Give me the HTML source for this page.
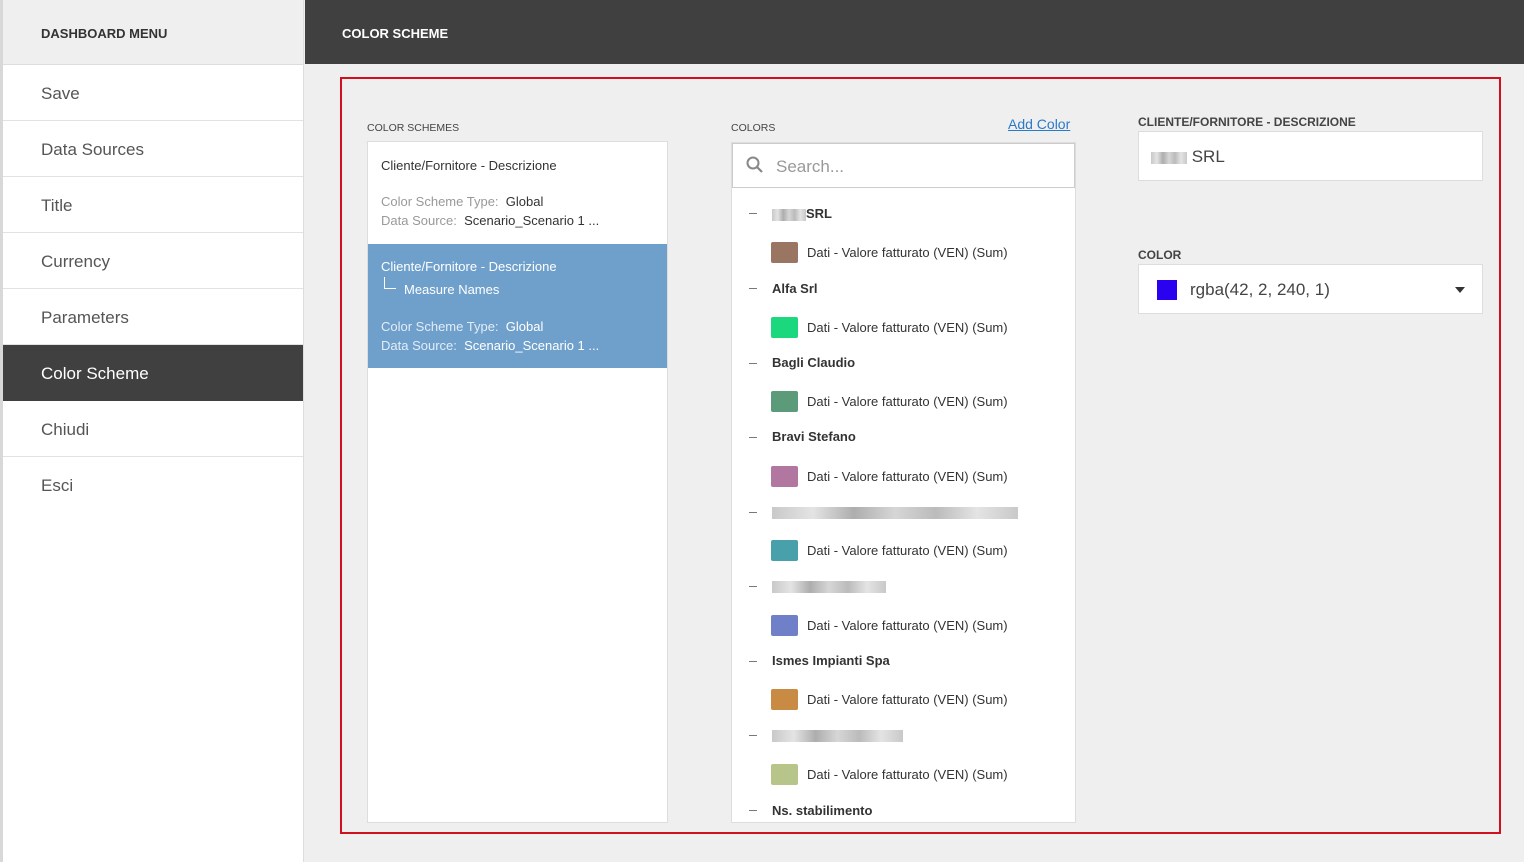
<!DOCTYPE html>
<html><head><meta charset="utf-8"><style>
*{box-sizing:border-box;margin:0;padding:0}
body{width:1524px;height:862px;overflow:hidden;background:#efefef;font-family:"Liberation Sans",sans-serif;position:relative;color:#333}
.abs{position:absolute}
#side{left:0;top:0;width:304px;height:862px;background:#fff;border-right:1px solid #ddd;border-left:3px solid #d8d8d8}
#side .hd{height:65px;background:#efefef;border-bottom:1px solid #ddd;font-weight:bold;font-size:13px;color:#333;padding:26px 0 0 38px}
.mi{height:56px;border-bottom:1px solid #e2e2e2;font-size:17px;color:#555;padding:19px 0 0 38px}
.mi.act{background:#404040;color:#fff;border-color:#404040}
.mi.last{border-bottom:none}
#top{left:305px;top:0;width:1219px;height:64px;background:#404040;color:#fff;font-weight:bold;font-size:13px;padding:26px 0 0 37px}
#red{left:340px;top:77px;width:1161px;height:757px;border:2px solid #d0101e}
.lbl{font-size:10.5px;color:#444}
.box{background:#fff;border:1px solid #ddd}
.g{color:#999}
.row{position:absolute;left:0;font-size:13px}
.dash{position:absolute;left:17px;width:8px;height:1px;background:#777}
.sw{position:absolute;left:39px;width:27px;height:21px;border-radius:2px}
.blur{display:inline-block;height:12px;background:linear-gradient(90deg,#bbb,#ddd,#999,#ccc,#aaa,#ddd,#bbb);vertical-align:middle;opacity:.8}
</style></head><body>
<div id="side" class="abs">
<div class="hd">DASHBOARD MENU</div>
<div class="mi">Save</div>
<div class="mi">Data Sources</div>
<div class="mi">Title</div>
<div class="mi">Currency</div>
<div class="mi">Parameters</div>
<div class="mi act">Color Scheme</div>
<div class="mi">Chiudi</div>
<div class="mi last">Esci</div>
</div>
<div id="top" class="abs">COLOR SCHEME</div>
<div id="red" class="abs"></div>

<div class="abs lbl" style="left:367px;top:122px">COLOR SCHEMES</div>
<div class="abs box" style="left:367px;top:141px;width:301px;height:682px">
 <div style="height:102px;padding:16px 13px 0;font-size:13px">
  <div>Cliente/Fornitore - Descrizione</div>
  <div style="margin-top:21px"><span class="g">Color Scheme Type:</span>&nbsp; Global</div>
  <div style="margin-top:4px"><span class="g">Data Source:</span>&nbsp; Scenario_Scenario 1 ...</div>
 </div>
 <div style="height:124px;background:#6fa0cb;color:#fff;padding:15px 13px 0;font-size:13px">
  <div>Cliente/Fornitore - Descrizione</div>
  <div style="margin-top:8px;position:relative;padding-left:23px">
   <span style="position:absolute;left:3px;top:-5px;width:12px;height:12px;border-left:1px solid #fff;border-bottom:1px solid #fff"></span>Measure Names</div>
  <div style="margin-top:22px"><span style="color:#e2ecf6">Color Scheme Type:</span>&nbsp; Global</div>
  <div style="margin-top:4px"><span style="color:#e2ecf6">Data Source:</span>&nbsp; Scenario_Scenario 1 ...</div>
 </div>
</div>

<div class="abs lbl" style="left:731px;top:122px">COLORS</div>
<div class="abs" style="left:1008px;top:116px;font-size:14px;color:#2a7ac8;text-decoration:underline">Add Color</div>
<div class="abs box" style="left:731px;top:142px;width:345px;height:681px;overflow:hidden">
 <div style="height:45px;border:1px solid #ccc;margin:0;position:relative">
  <svg style="position:absolute;left:13px;top:12px" width="18" height="18" viewBox="0 0 18 18"><circle cx="7" cy="7" r="5.5" fill="none" stroke="#888" stroke-width="2"/><path d="M11 11l5 5" stroke="#888" stroke-width="2.2"/></svg>
  <span style="position:absolute;left:43px;top:13px;font-size:17px;color:#999">Search...</span>
 </div>
 <div style="position:relative">
  <div class="dash" style="top:25px"></div><div class="row" style="left:40px;top:18px;font-weight:bold"><span class="blur" style="width:34px"></span>SRL</div>
  <div class="sw" style="top:54px;background:#9a7561"></div><div class="row" style="left:75px;top:57px">Dati - Valore fatturato (VEN) (Sum)</div>
  <div class="dash" style="top:100px"></div><div class="row" style="left:40px;top:93px;font-weight:bold">Alfa Srl</div>
  <div class="sw" style="top:129px;background:#1bd87f"></div><div class="row" style="left:75px;top:132px">Dati - Valore fatturato (VEN) (Sum)</div>
  <div class="dash" style="top:175px"></div><div class="row" style="left:40px;top:167px;font-weight:bold">Bagli Claudio</div>
  <div class="sw" style="top:203px;background:#5b9b79"></div><div class="row" style="left:75px;top:206px">Dati - Valore fatturato (VEN) (Sum)</div>
  <div class="dash" style="top:249px"></div><div class="row" style="left:40px;top:241px;font-weight:bold">Bravi Stefano</div>
  <div class="sw" style="top:278px;background:#b177a0"></div><div class="row" style="left:75px;top:281px">Dati - Valore fatturato (VEN) (Sum)</div>
  <div class="dash" style="top:324px"></div><div class="row" style="left:40px;top:316px"><span class="blur" style="width:246px"></span></div>
  <div class="sw" style="top:352px;background:#48a0aa"></div><div class="row" style="left:75px;top:355px">Dati - Valore fatturato (VEN) (Sum)</div>
  <div class="dash" style="top:398px"></div><div class="row" style="left:40px;top:390px"><span class="blur" style="width:114px"></span></div>
  <div class="sw" style="top:427px;background:#6f80c8"></div><div class="row" style="left:75px;top:430px">Dati - Valore fatturato (VEN) (Sum)</div>
  <div class="dash" style="top:473px"></div><div class="row" style="left:40px;top:465px;font-weight:bold">Ismes Impianti Spa</div>
  <div class="sw" style="top:501px;background:#c98a44"></div><div class="row" style="left:75px;top:504px">Dati - Valore fatturato (VEN) (Sum)</div>
  <div class="dash" style="top:547px"></div><div class="row" style="left:40px;top:539px"><span class="blur" style="width:131px"></span></div>
  <div class="sw" style="top:576px;background:#b8c58a"></div><div class="row" style="left:75px;top:579px">Dati - Valore fatturato (VEN) (Sum)</div>
  <div class="dash" style="top:622px"></div><div class="row" style="left:40px;top:615px;font-weight:bold">Ns. stabilimento</div>
 </div>
</div>

<div class="abs" style="left:1138px;top:115px;font-size:12px;font-weight:bold;color:#444">CLIENTE/FORNITORE - DESCRIZIONE</div>
<div class="abs box" style="left:1138px;top:131px;width:345px;height:50px;font-size:17px;color:#444;padding:15px 0 0 12px"><span class="blur" style="width:36px"></span> SRL</div>
<div class="abs" style="left:1138px;top:248px;font-size:12px;font-weight:bold;color:#444">COLOR</div>
<div class="abs box" style="left:1138px;top:264px;width:345px;height:50px;font-size:17px;color:#444">
 <span style="position:absolute;left:18px;top:15px;width:20px;height:20px;background:#2a02f0"></span>
 <span style="position:absolute;left:51px;top:15px">rgba(42, 2, 240, 1)</span>
 <span style="position:absolute;right:17px;top:22px;border-left:5px solid transparent;border-right:5px solid transparent;border-top:6px solid #333"></span>
</div>
</body></html>
